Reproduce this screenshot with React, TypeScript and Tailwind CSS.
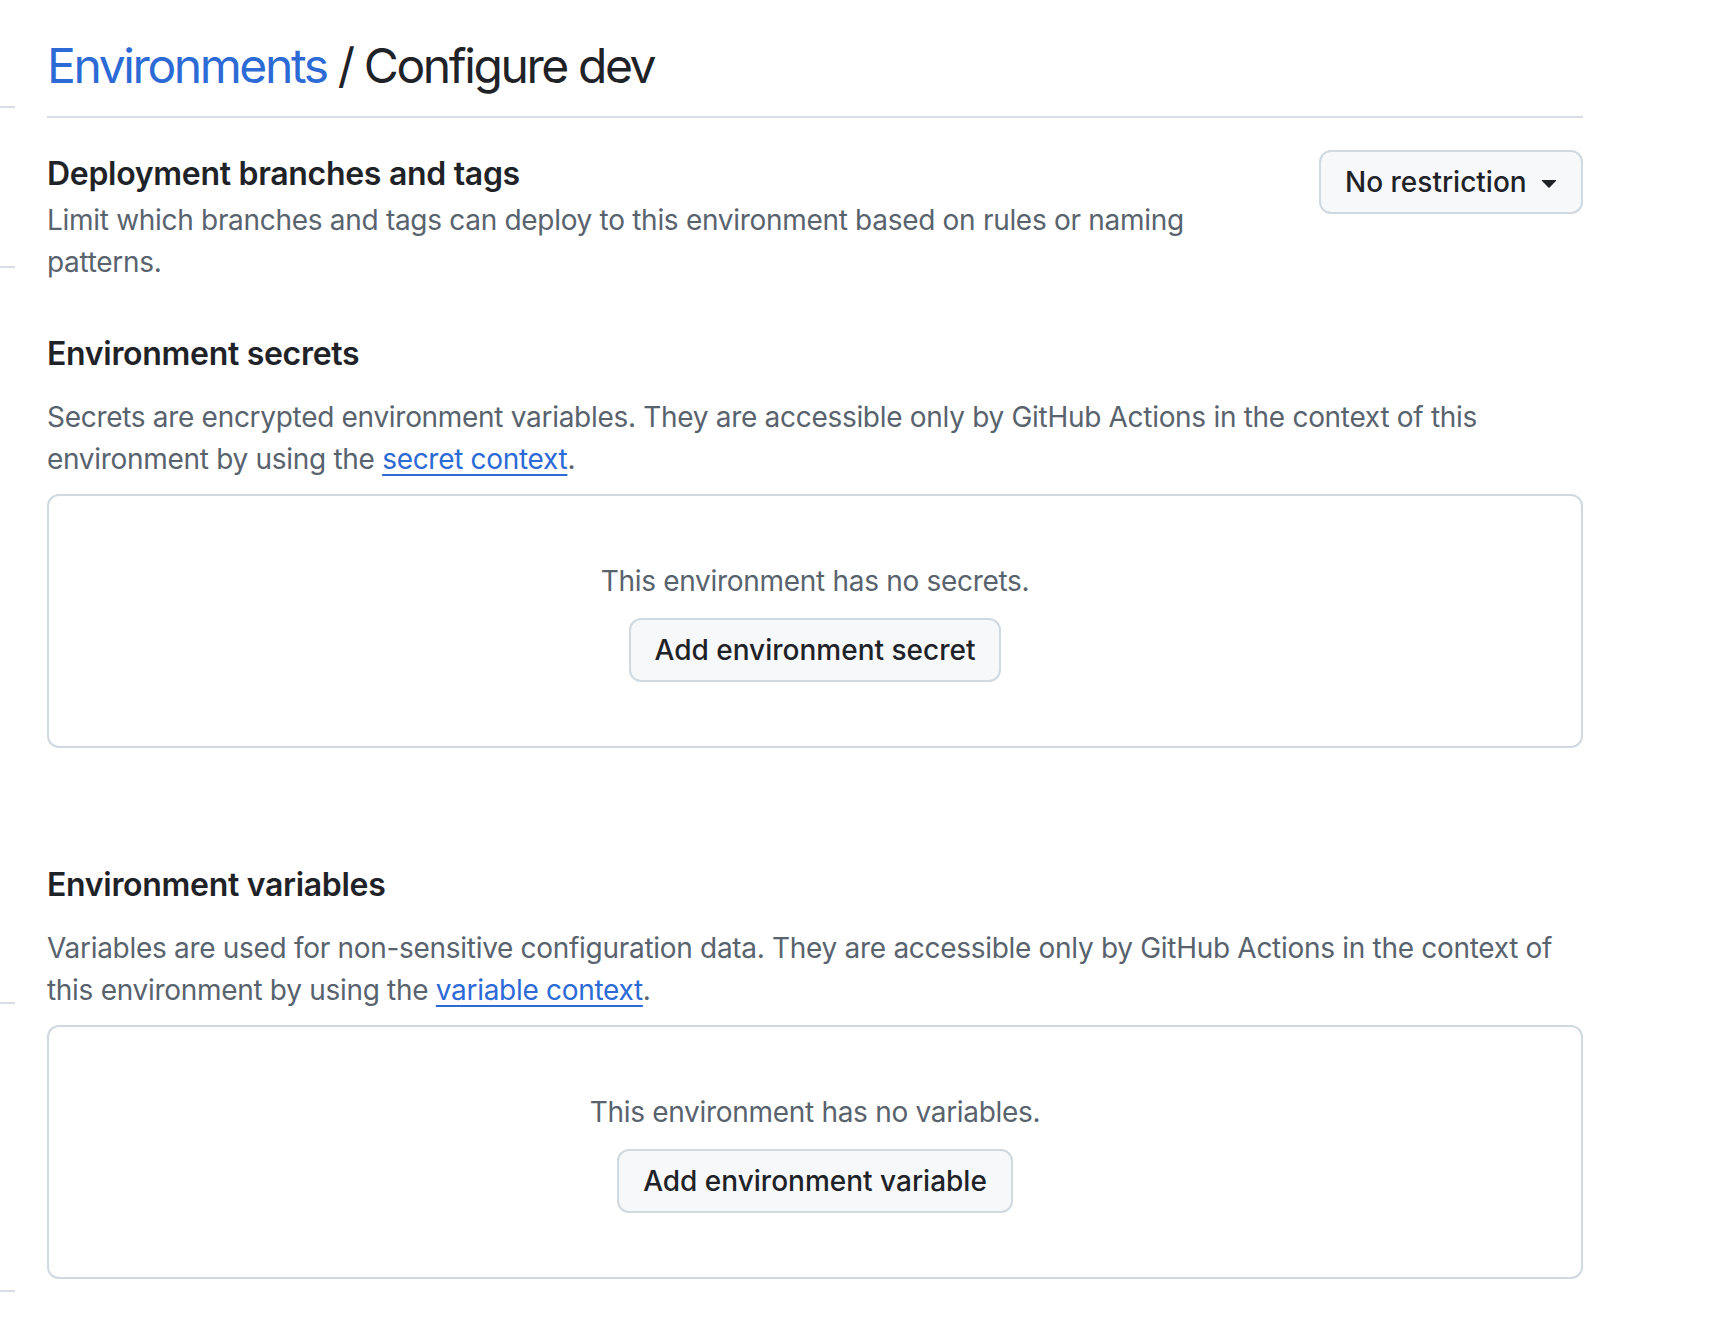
import React from 'react';

const TriangleDown: React.FC = () => (
  <svg width="32" height="32" viewBox="0 0 16 16" fill="#1f2328" aria-hidden="true">
    <path d="m4.427 7.427 3.396 3.396a.25.25 0 0 0 .354 0l3.396-3.396A.25.25 0 0 0 11.396 7H4.604a.25.25 0 0 0-.177.427Z" />
  </svg>
);

interface EmptyBoxProps {
  message: string;
  action: string;
}

const EmptyBox: React.FC<EmptyBoxProps> = ({ message, action }) => (
  <div className="mt-[14px] flex flex-col items-center rounded-[12px] border-2 border-[#d1d9e0] p-[64px]">
    <p className="text-[28px] leading-[42px] tracking-[-0.3px] text-[#59636e]">{message}</p>
    <button className="mt-[16px] flex h-[64px] items-center rounded-[12px] border-2 border-[#d1d9e0] bg-[#f6f8fa] px-[24px] text-[28px] font-medium leading-[42px] text-[#1f2328]">
      {action}
    </button>
  </div>
);

const App: React.FC = () => {
  return (
    <div className="flex min-h-screen bg-white font-['Inter','Noto_Sans',sans-serif] text-[#1f2328]">
      {/* edge of the cut-off side nav */}
      <aside className="flex w-[15px] shrink-0 flex-col">
        <div className="mt-[106px] h-[2px] bg-[#d8dee4]" />
        <div className="mt-[158px] h-[2px] bg-[#d8dee4]" />
        <div className="mt-[734px] h-[2px] bg-[#d8dee4]" />
        <div className="mt-[286px] h-[2px] bg-[#d8dee4]" />
      </aside>

      <main className="ml-[32px] w-[1536px] shrink-0 pt-[30px]">
        <div className="border-b-2 border-[#d8dee4] pb-[14px]">
          <h1 className="text-[48px] font-normal leading-[72px] tracking-[-2.4px]">
            <a href="#" className="text-[#2c6ad6]">Environments</a> / Configure dev
          </h1>
        </div>

        <section className="mt-[32px] flex items-start justify-between gap-[48px]">
          <div className="flex-1">
            <h2 className="text-[32px] font-semibold leading-[48px] tracking-[-0.3px]">Deployment branches and tags</h2>
            <p className="mt-[1px] text-[28px] leading-[42px] tracking-[-0.3px] text-[#59636e]">
              Limit which branches and tags can deploy to this environment based on rules or naming patterns.
            </p>
          </div>
          <button className="flex h-[64px] w-[264px] shrink-0 items-center justify-between rounded-[12px] border-2 border-[#d1d9e0] bg-[#f6f8fa] pl-[24px] pr-[16px] text-[28px] font-medium leading-[42px] text-[#1f2328]">
            <span>No restriction</span>
            <TriangleDown />
          </button>
        </section>

        <section className="mt-[47px]">
          <h2 className="text-[32px] font-semibold leading-[48px] tracking-[-0.3px]">Environment secrets</h2>
          <p className="mt-[18px] text-[28px] leading-[42px] tracking-[-0.3px] text-[#59636e]">
            Secrets are encrypted environment variables. They are accessible only by GitHub Actions in the context of this
            environment by using the{' '}
            <a href="#" className="text-[#2c6ad6] underline decoration-2 underline-offset-[5px]">secret context</a>.
          </p>
          <EmptyBox message="This environment has no secrets." action="Add environment secret" />
        </section>

        <section className="mt-[113px]">
          <h2 className="text-[32px] font-semibold leading-[48px] tracking-[-0.3px]">Environment variables</h2>
          <p className="mt-[18px] text-[28px] leading-[42px] tracking-[-0.3px] text-[#59636e]">
            Variables are used for non-sensitive configuration data. They are accessible only by GitHub Actions in the
            context of this environment by using the{' '}
            <a href="#" className="text-[#2c6ad6] underline decoration-2 underline-offset-[5px]">variable context</a>.
          </p>
          <EmptyBox message="This environment has no variables." action="Add environment variable" />
        </section>
      </main>
    </div>
  );
};

export default App;
